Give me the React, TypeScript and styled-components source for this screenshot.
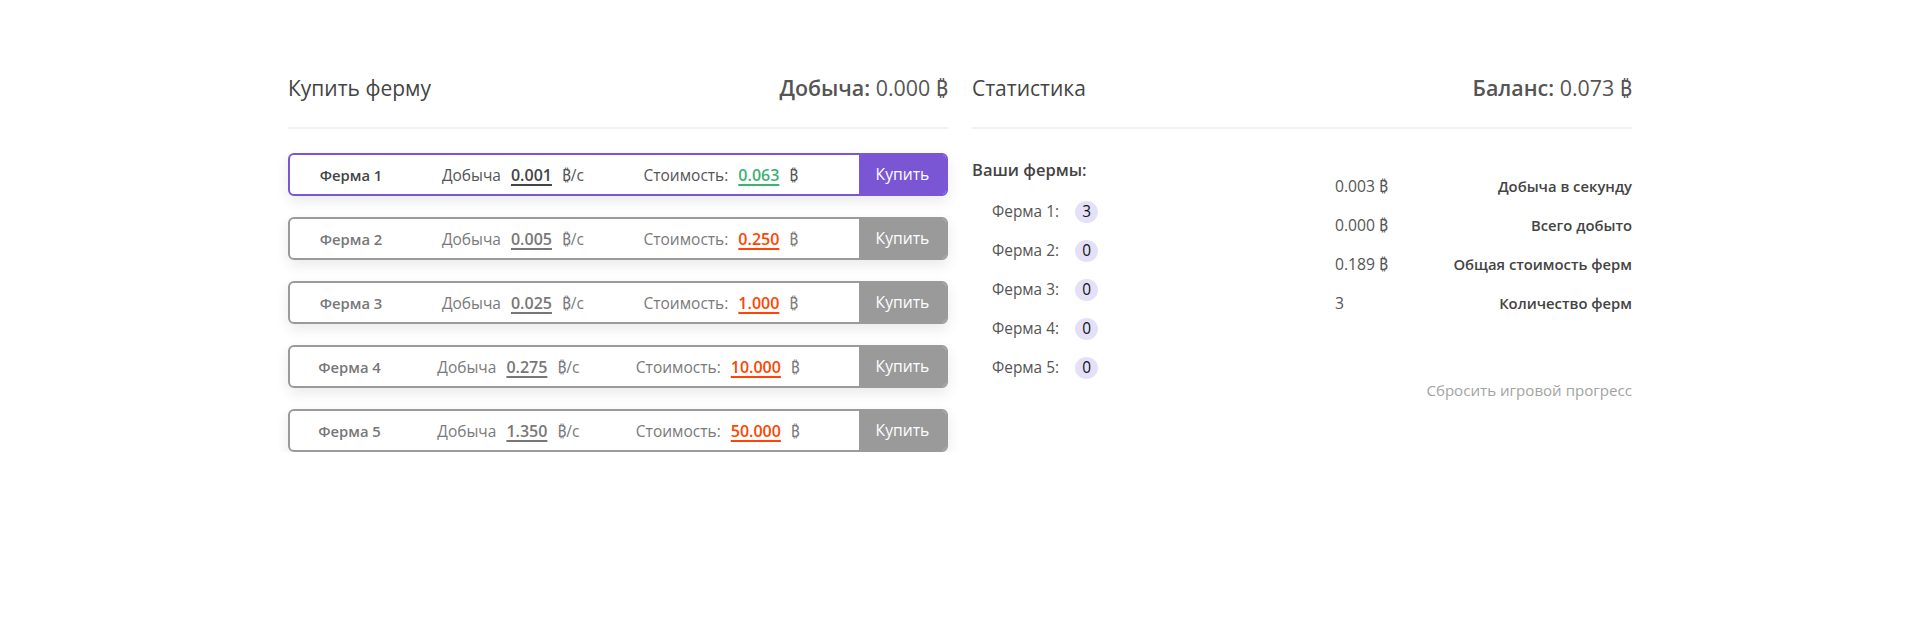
import React from "react";
import styled, { createGlobalStyle } from "styled-components";

const Global = createGlobalStyle`
  html, body { margin: 0; padding: 0; background: #fff; }
  body { font-family: "Open Sans", "Noto Sans", sans-serif; color: #4a4a4a; }
`;

const Page = styled.div`
  padding-top: 74px;
`;

const Container = styled.div`
  width: 1344px;
  margin: 0 auto;
  display: grid;
  grid-template-columns: 1fr 1fr;
  column-gap: 24px;
`;

const Column = styled.section`
  display: flex;
  flex-direction: column;
`;

const Header = styled.header`
  display: flex;
  justify-content: space-between;
  align-items: center;
  height: 28px;
  padding-bottom: 25px;
  border-bottom: 2px solid #f2f2f2;
`;

const Title = styled.h2`
  margin: 0;
  font-size: 21px;
  font-weight: 400;
  line-height: 28px;
  color: #444;
`;

const Summary = styled.div`
  font-size: 21.4px;
  line-height: 28px;
  color: #555;
  b { font-weight: 600; }
`;

const FarmList = styled.div`
  margin-top: 24px;
  display: flex;
  flex-direction: column;
  gap: 21px;
`;

const FarmRow = styled.div<{ $active: boolean }>`
  box-sizing: border-box;
  height: 43px;
  display: flex;
  align-items: stretch;
  border: 2px solid ${(p) => (p.$active ? "#7a55d4" : "#9a9a9a")};
  border-radius: 6px;
  overflow: hidden;
  background: #fff;
  box-shadow: 0 5px 14px rgba(0, 0, 0, 0.09);
`;

const RowInfo = styled.div<{ $active: boolean }>`
  flex: 1;
  display: flex;
  align-items: center;
  justify-content: space-around;
  padding-right: 31px;
  font-size: 15.5px;
  color: ${(p) => (p.$active ? "#555" : "#7a7a7a")};
`;

const FarmName = styled.span<{ $active: boolean }>`
  font-size: 14.8px;
  font-weight: 600;
  color: ${(p) => (p.$active ? "#444" : "#777")};
`;

const Group = styled.span`
  display: flex;
  align-items: center;
  gap: 10px;
  white-space: nowrap;
`;

const Num = styled.span<{ $color: string }>`
  font-size: 16px;
  font-weight: 600;
  color: ${(p) => p.$color};
  text-decoration: underline;
  text-decoration-thickness: 2px;
  text-underline-offset: 3px;
`;

const BuyButton = styled.button<{ $active: boolean }>`
  width: 87px;
  border: 0;
  margin: 0;
  padding: 0 0 1px;
  font-family: inherit;
  font-size: 15.7px;
  color: #fff;
  background: ${(p) => (p.$active ? "#7a55d4" : "#9a9a9a")};
  cursor: pointer;
`;

const StatsBody = styled.div`
  padding-top: 29px;
  display: grid;
  grid-template-columns: 1fr 1fr;
`;

const SubTitle = styled.div`
  font-size: 16.5px;
  font-weight: 600;
  line-height: 24px;
  color: #444;
`;

const OwnedList = styled.div`
  margin-top: 10px;
  display: flex;
  flex-direction: column;
`;

const OwnedItem = styled.div`
  height: 39px;
  display: flex;
  align-items: center;
  padding-left: 20px;
  font-size: 15.4px;
  color: #555;
`;

const OwnedLabel = styled.span`
  white-space: nowrap;
`;

const Badge = styled.span`
  flex: none;
  margin-left: 16px;
  width: 23px;
  height: 22px;
  border-radius: 50%;
  background: #e4e0f7;
  color: #111;
  display: inline-flex;
  align-items: center;
  justify-content: center;
  font-size: 15.4px;
`;

const StatsSide = styled.div`
  padding-top: 8px;
  padding-left: 33px;
  display: flex;
  flex-direction: column;
`;

const StatRow = styled.div`
  height: 39px;
  display: flex;
  align-items: center;
  justify-content: space-between;
`;

const StatValue = styled.span`
  font-size: 15.7px;
  color: #555;
`;

const StatLabel = styled.span`
  font-size: 14.8px;
  font-weight: 600;
  color: #444;
`;

const ResetLink = styled.a`
  margin-top: 58px;
  align-self: flex-end;
  font-size: 15.1px;
  line-height: 20px;
  color: #a3a3a3;
  cursor: pointer;
`;

const farms = [
  { name: "Ферма 1", rate: "0.001", cost: "0.063", active: true },
  { name: "Ферма 2", rate: "0.005", cost: "0.250", active: false },
  { name: "Ферма 3", rate: "0.025", cost: "1.000", active: false },
  { name: "Ферма 4", rate: "0.275", cost: "10.000", active: false },
  { name: "Ферма 5", rate: "1.350", cost: "50.000", active: false },
];

const owned = [3, 0, 0, 0, 0];

const stats = [
  { value: "0.003 ₿", label: "Добыча в секунду" },
  { value: "0.000 ₿", label: "Всего добыто" },
  { value: "0.189 ₿", label: "Общая стоимость ферм" },
  { value: "3", label: "Количество ферм" },
];

export default function App() {
  return (
    <Page>
      <Global />
      <Container>
        <Column>
          <Header>
            <Title>Купить ферму</Title>
            <Summary>
              <b>Добыча:</b> 0.000 ₿
            </Summary>
          </Header>
          <FarmList>
            {farms.map((f) => (
              <FarmRow key={f.name} $active={f.active}>
                <RowInfo $active={f.active}>
                  <FarmName $active={f.active}>{f.name}</FarmName>
                  <Group>
                    <span>Добыча</span>
                    <Num $color={f.active ? "#444" : "#777"}>{f.rate}</Num>
                    <span>₿/с</span>
                  </Group>
                  <Group>
                    <span>Стоимость:</span>
                    <Num $color={f.active ? "#3cb371" : "#ff4500"}>{f.cost}</Num>
                    <span>₿</span>
                  </Group>
                </RowInfo>
                <BuyButton $active={f.active}>Купить</BuyButton>
              </FarmRow>
            ))}
          </FarmList>
        </Column>
        <Column>
          <Header>
            <Title>Статистика</Title>
            <Summary>
              <b>Баланс:</b> 0.073 ₿
            </Summary>
          </Header>
          <StatsBody>
            <div>
              <SubTitle>Ваши фермы:</SubTitle>
              <OwnedList>
                {owned.map((n, i) => (
                  <OwnedItem key={i}>
                    <OwnedLabel>Ферма {i + 1}:</OwnedLabel>
                    <Badge>{n}</Badge>
                  </OwnedItem>
                ))}
              </OwnedList>
            </div>
            <StatsSide>
              {stats.map((s) => (
                <StatRow key={s.label}>
                  <StatValue>{s.value}</StatValue>
                  <StatLabel>{s.label}</StatLabel>
                </StatRow>
              ))}
              <ResetLink>Сбросить игровой прогресс</ResetLink>
            </StatsSide>
          </StatsBody>
        </Column>
      </Container>
    </Page>
  );
}
